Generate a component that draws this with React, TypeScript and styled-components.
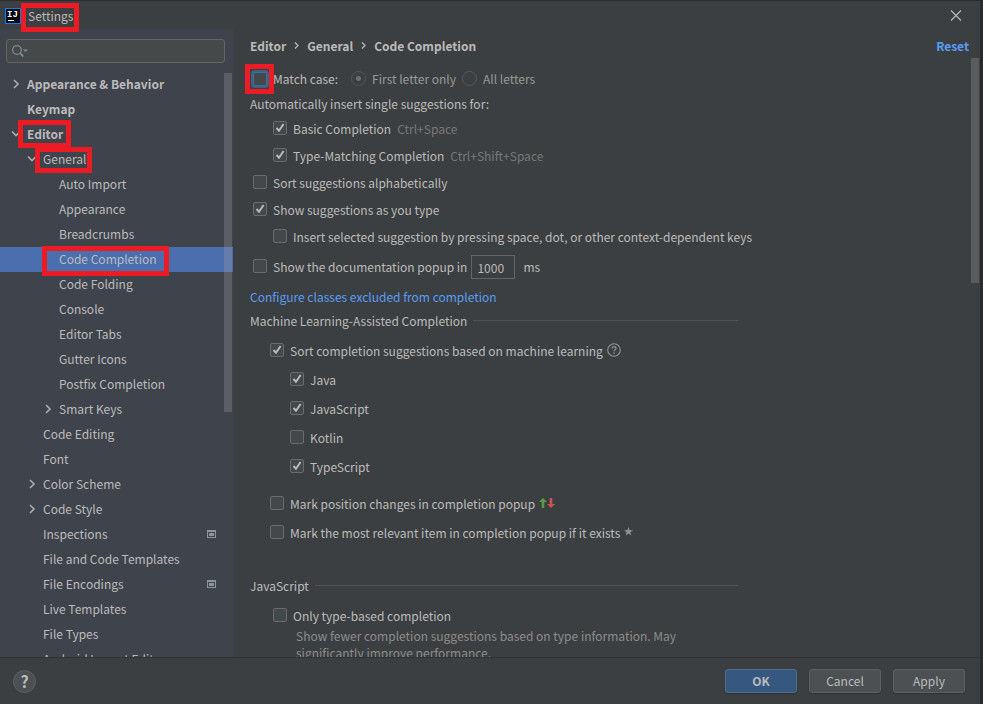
import React from "react";
import styled, { createGlobalStyle, css } from "styled-components";

const GlobalStyle = createGlobalStyle`
  *, *::before, *::after { box-sizing: border-box; }
  body { margin: 0; background: #2b2b2b; }
  body, button, input { font: 12px/16px "Noto Sans CJK KR", "Noto Sans", sans-serif; color: #bbbbbb; }
`;

const Dialog = styled.div`
  display: flex;
  flex-direction: column;
  height: 100vh;
  background: #3c3f41;
  border: solid #2b2b2b;
  border-width: 1px 3px 0 0;
`;

const TitleBar = styled.header`
  display: flex;
  align-items: center;
  height: 28px;
  flex: none;
  padding: 2px 18px 0 5px;
  gap: 7px;
`;

const Title = styled.h1`
  flex: 1;
  margin: 0;
  font-size: 12px;
  line-height: 16px;
  font-weight: 400;
`;

const IconButton = styled.button`
  display: grid;
  place-items: center;
  padding: 0;
  border: 0;
  background: none;
`;

const Columns = styled.div`
  flex: 1;
  min-height: 0;
  display: flex;
`;

const Sidebar = styled.aside`
  flex: none;
  width: 233px;
  display: flex;
  flex-direction: column;
  background: #3f434c;
`;

const SearchBox = styled.label`
  display: flex;
  align-items: center;
  flex: none;
  height: 24px;
  margin: 10px 8px 9px 6px;
  padding: 0 5px;
  gap: 4px;
  background: #45494a;
  border: 1px solid #646464;
  border-radius: 3px;
`;

const SearchInput = styled.input`
  flex: 1;
  min-width: 0;
  padding: 0;
  border: 0;
  outline: 0;
  background: none;
`;

const TreeArea = styled.div`
  position: relative;
  flex: 1;
  min-height: 0;
  overflow: hidden;
`;

const Tree = styled.ul`
  margin: 0;
  padding: 0;
  list-style: none;
`;

const TreeRow = styled.button<{ $depth: number; $selected?: boolean; $bold?: boolean }>`
  display: flex;
  align-items: center;
  width: 100%;
  height: 25px;
  padding: 0 17px 2px ${(p) => 8 + p.$depth * 16}px;
  gap: 3px;
  border: 0;
  text-align: left;
  white-space: nowrap;
  background: ${(p) => (p.$selected ? "#4b6eaf" : "transparent")};
  font-weight: ${(p) => (p.$bold ? 700 : 400)};
`;

const ArrowCell = styled.span`
  width: 16px;
  height: 16px;
  flex: none;
`;

const RowLabel = styled.span`
  flex: 1;
`;

const Scrollbar = styled.div<{ $length: string }>`
  position: absolute;
  top: 1px;
  right: 1px;
  width: 8px;
  height: ${(p) => p.$length};
  background: rgba(166, 166, 166, 0.28);
`;

const Marked = styled.span<{ $inset: string }>`
  position: relative;
  display: inline-block;
  &::after {
    content: "";
    position: absolute;
    z-index: 1;
    inset: ${(p) => p.$inset};
    border: 5px solid #ed1c24;
    pointer-events: none;
  }
`;

const Main = styled.main`
  flex: 1;
  min-width: 0;
  display: flex;
  flex-direction: column;
`;

const MainHeader = styled.div`
  display: flex;
  align-items: center;
  justify-content: space-between;
  flex: none;
  height: 28px;
  padding: 6px 11px 0 17px;
`;

const Breadcrumbs = styled.nav`
  display: flex;
  align-items: center;
  gap: 8px;
  font-weight: 700;
`;

const Link = styled.a<{ $strong?: boolean }>`
  color: #589df6;
  text-decoration: none;
  font-weight: ${(p) => (p.$strong ? 700 : 400)};
`;

const Options = styled.div`
  position: relative;
  flex: 1;
  min-height: 0;
  overflow: hidden;
  padding: 8px 0 0 17px;
`;

const Form = styled.form`
  max-width: 488px;
`;

const OptionRow = styled.div<{ $indent?: number; $height?: number }>`
  display: flex;
  align-items: center;
  height: ${(p) => p.$height ?? 27}px;
  padding-left: ${(p) => p.$indent ?? 0}px;
  white-space: nowrap;
`;

const OptionLabel = styled.label<{ $disabled?: boolean }>`
  display: flex;
  align-items: center;
  gap: 6px;
  color: ${(p) => (p.$disabled ? "#999999" : "#bbbbbb")};
`;

const CheckBox = styled.input<{ $focused?: boolean }>`
  appearance: none;
  display: block;
  flex: none;
  width: 14px;
  height: 14px;
  margin: 0 0 2px;
  border: 1px solid #6b6b6b;
  border-radius: 2px;
  background: #43494a;
  &:checked {
    background: #43494a
      url("data:image/svg+xml,%3Csvg xmlns='http://www.w3.org/2000/svg' width='12' height='12'%3E%3Cpath d='M2.5 6 5 8.7 9.6 2' fill='none' stroke='%23bbbbbb' stroke-width='2'/%3E%3C/svg%3E")
      center no-repeat;
  }
  ${(p) =>
    p.$focused &&
    css`
      margin: 0;
      border-color: #466d94;
      box-shadow: 0 0 0 2px #3d6185;
    `}
`;

const Radio = styled.input`
  appearance: none;
  flex: none;
  width: 15px;
  height: 15px;
  margin: 0;
  border: 1px solid #545658;
  border-radius: 50%;
  &:checked {
    background: radial-gradient(circle, #6b6d6f 2px, transparent 3px);
  }
`;

const RadioGroup = styled.div`
  display: flex;
  gap: 6px;
  padding-left: 13px;
`;

const Shortcut = styled.span`
  padding-left: 6px;
  color: #787878;
`;

const DelayInput = styled.input`
  width: 44px;
  height: 24px;
  margin: 0 8px 0 4px;
  padding: 0 5px;
  border: 1px solid #646464;
  background: #3c3f41;
`;

const Section = styled.h2<{ $above?: number; $below: number }>`
  display: flex;
  align-items: center;
  gap: 6px;
  height: 21px;
  margin: ${(p) => p.$above ?? 0}px 0 ${(p) => p.$below}px;
  font-size: 12px;
  line-height: 16px;
  font-weight: 400;
  &::after {
    content: "";
    flex: 1;
    height: 1px;
    background: #515456;
  }
`;

const Group = styled.div`
  margin-bottom: 8px;
`;

const Hint = styled.p`
  width: 400px;
  margin: -2px 0 0 46px;
  line-height: 17px;
  color: #8c8c8c;
`;

const Footer = styled.footer`
  display: flex;
  align-items: center;
  flex: none;
  height: 47px;
  gap: 12px;
  padding: 0 15px 0 13px;
  border-top: 1px solid #2f3133;
`;

const HelpButton = styled.button`
  width: 23px;
  height: 23px;
  margin-right: auto;
  padding: 0;
  border: 1px solid #5e6060;
  border-radius: 50%;
  background: #4c5052;
  font-size: 16px;
  font-weight: 700;
  line-height: 20px;
`;

const PushButton = styled.button<{ $primary?: boolean }>`
  width: 72px;
  height: 24px;
  padding: 0;
  border: 1px solid ${(p) => (p.$primary ? "#4c708c" : "#5e6060")};
  border-radius: 3px;
  background: ${(p) => (p.$primary ? "#365880" : "#4c5052")};
  font-weight: ${(p) => (p.$primary ? 700 : 400)};
  box-shadow: 0 1px 1px rgba(0, 0, 0, 0.2);
`;

const TrailingIcon = styled.svg`
  flex: none;
  margin: 0 0 2px 4px;
`;

function Logo() {
  return (
    <svg width="16" height="16" viewBox="0 0 16 16" aria-hidden="true">
      <rect x="0.5" y="0.5" width="15" height="15" fill="#090a0c" stroke="#087cfa" />
      <text x="2" y="9" fontFamily="Liberation Mono, monospace" fontSize="9" fontWeight="700" fill="#ffffff">
        IJ
      </text>
      <path d="M3 12.5h6" stroke="#ffffff" />
    </svg>
  );
}

function Arrow({ open }: { open?: boolean }) {
  return (
    <svg width="16" height="16" viewBox="0 0 16 16" aria-hidden="true">
      <path d={open ? "M4 5.5 8 9.5 12 5.5" : "M6 4 10 8 6 12"} fill="none" stroke="#adadad" strokeWidth="1.6" />
    </svg>
  );
}

function Crumb() {
  return (
    <svg width="5" height="10" viewBox="0 0 5 10" aria-hidden="true">
      <path d="M1 1.5 4 4.5 1 7.5" fill="none" stroke="#bbbbbb" strokeWidth="1.2" />
    </svg>
  );
}

function ProjectIcon() {
  return (
    <svg width="9" height="8" viewBox="0 0 9 8" aria-hidden="true">
      <path d="M0 0h9v8H0zM1 2v5h7V2z" fill="#8b95a0" fillRule="evenodd" />
      <rect x="2" y="3" width="5" height="3" fill="#8b95a0" />
    </svg>
  );
}

type Node = {
  label: string;
  depth: number;
  arrow?: "open" | "closed";
  bold?: boolean;
  selected?: boolean;
  project?: boolean;
  mark?: string;
};

const nodes: Node[] = [
  { label: "Appearance & Behavior", depth: 0, arrow: "closed", bold: true },
  { label: "Keymap", depth: 0, bold: true },
  { label: "Editor", depth: 0, arrow: "open", bold: true, mark: "-6px -8px -6px -9px" },
  { label: "General", depth: 1, arrow: "open", mark: "-4px -6px -6px -8px" },
  { label: "Auto Import", depth: 2 },
  { label: "Appearance", depth: 2 },
  { label: "Breadcrumbs", depth: 2 },
  { label: "Code Completion", depth: 2, selected: true, mark: "-5px -12px -9px -17px" },
  { label: "Code Folding", depth: 2 },
  { label: "Console", depth: 2 },
  { label: "Editor Tabs", depth: 2 },
  { label: "Gutter Icons", depth: 2 },
  { label: "Postfix Completion", depth: 2 },
  { label: "Smart Keys", depth: 2, arrow: "closed" },
  { label: "Code Editing", depth: 1 },
  { label: "Font", depth: 1 },
  { label: "Color Scheme", depth: 1, arrow: "closed" },
  { label: "Code Style", depth: 1, arrow: "closed" },
  { label: "Inspections", depth: 1, project: true },
  { label: "File and Code Templates", depth: 1 },
  { label: "File Encodings", depth: 1, project: true },
  { label: "Live Templates", depth: 1 },
  { label: "File Types", depth: 1 },
  { label: "Android Layout Editor", depth: 1 },
];

type OptionProps = {
  label: string;
  indent: number;
  height?: number;
  checked?: boolean;
  children?: React.ReactNode;
};

function Option({ label, indent, height, checked, children }: OptionProps) {
  return (
    <OptionRow $indent={indent} $height={height}>
      <OptionLabel>
        <CheckBox type="checkbox" defaultChecked={checked} />
        {label}
      </OptionLabel>
      {children}
    </OptionRow>
  );
}

export default function App() {
  return (
    <Dialog role="dialog" aria-label="Settings">
      <GlobalStyle />
      <TitleBar>
        <Logo />
        <Title>
          <Marked $inset="-5px -6px -8px -7px">Settings</Marked>
        </Title>
        <IconButton type="button" aria-label="Close">
          <svg width="12" height="12" viewBox="0 0 12 12">
            <path d="M1 0.5 11 10.5M11 0.5 1 10.5" stroke="#bbbbbb" strokeWidth="1.1" />
          </svg>
        </IconButton>
      </TitleBar>
      <Columns>
        <Sidebar>
          <SearchBox>
            <svg width="17" height="14" viewBox="0 0 17 14" aria-hidden="true">
              <circle cx="5" cy="6" r="4.3" fill="none" stroke="#7f8b91" strokeWidth="1.3" />
              <path d="M8 9.2 11.3 12.5" stroke="#7f8b91" strokeWidth="1.8" />
              <path d="M11 5.5h5L13.5 8z" fill="#7f8b91" />
            </svg>
            <SearchInput type="text" aria-label="Search settings" />
          </SearchBox>
          <TreeArea>
            <Tree>
              {nodes.map((n) => (
                <li key={n.label}>
                  <TreeRow type="button" $depth={n.depth} $selected={n.selected} $bold={n.bold}>
                    <ArrowCell>{n.arrow && <Arrow open={n.arrow === "open"} />}</ArrowCell>
                    <RowLabel>{n.mark ? <Marked $inset={n.mark}>{n.label}</Marked> : n.label}</RowLabel>
                    {n.project && <ProjectIcon />}
                  </TreeRow>
                </li>
              ))}
            </Tree>
            <Scrollbar $length="58%" />
          </TreeArea>
        </Sidebar>
        <Main>
          <MainHeader>
            <Breadcrumbs aria-label="Breadcrumb">
              <span>Editor</span>
              <Crumb />
              <span>General</span>
              <Crumb />
              <span>Code Completion</span>
            </Breadcrumbs>
            <Link href="#reset" $strong>
              Reset
            </Link>
          </MainHeader>
          <Options>
            <Form>
              <OptionRow $indent={3}>
                <OptionLabel>
                  <Marked $inset="-8px -7px -8px -8px">
                    <CheckBox type="checkbox" $focused />
                  </Marked>
                  Match case:
                </OptionLabel>
                <RadioGroup role="radiogroup" aria-label="Match case">
                  <OptionLabel $disabled>
                    <Radio type="radio" name="case" defaultChecked disabled />
                    First letter only
                  </OptionLabel>
                  <OptionLabel $disabled>
                    <Radio type="radio" name="case" disabled />
                    All letters
                  </OptionLabel>
                </RadioGroup>
              </OptionRow>
              <OptionRow $height={23}>Automatically insert single suggestions for:</OptionRow>
              <Option label="Basic Completion" indent={23} checked>
                <Shortcut>Ctrl+Space</Shortcut>
              </Option>
              <Option label="Type-Matching Completion" indent={23} checked>
                <Shortcut>Ctrl+Shift+Space</Shortcut>
              </Option>
              <Option label="Sort suggestions alphabetically" indent={3} />
              <Option label="Show suggestions as you type" indent={3} checked />
              <Option
                label="Insert selected suggestion by pressing space, dot, or other context-dependent keys"
                indent={23}
              />
              <Option label="Show the documentation popup in" indent={3} height={34}>
                <DelayInput type="text" defaultValue="1000" aria-label="Delay in milliseconds" />
                ms
              </Option>
              <OptionRow $height={26}>
                <Link href="#excluded">Configure classes excluded from completion</Link>
              </OptionRow>
              <Section $below={5}>Machine Learning-Assisted Completion</Section>
              <Group>
                <Option label="Sort completion suggestions based on machine learning" indent={20} height={29} checked>
                  <TrailingIcon width="14" height="14" viewBox="0 0 14 14" aria-hidden="true">
                    <circle cx="7" cy="7" r="6.3" fill="none" stroke="#8f9799" strokeWidth="1.1" />
                    <path
                      d="M5 5.6C5 4.3 5.9 3.6 7 3.6s2 .7 2 1.8c0 1.3-2 1.5-2 2.9"
                      fill="none"
                      stroke="#8f9799"
                      strokeWidth="1.2"
                    />
                    <circle cx="7" cy="10.1" r="0.8" fill="#8f9799" />
                  </TrailingIcon>
                </Option>
                <Option label="Java" indent={40} height={29} checked />
                <Option label="JavaScript" indent={40} height={29} checked />
                <Option label="Kotlin" indent={40} height={29} />
                <Option label="TypeScript" indent={40} height={29} checked />
              </Group>
              <Option label="Mark position changes in completion popup" indent={20} height={29}>
                <TrailingIcon width="16" height="12" viewBox="0 0 16 12" aria-hidden="true">
                  <path d="M4 1 8 5H5.3v6H2.7V5H0z" fill="#5b9a48" />
                  <path d="M12 11 8 7h2.7V1h2.6v6H16z" fill="#c75450" />
                </TrailingIcon>
              </Option>
              <Option label="Mark the most relevant item in completion popup if it exists" indent={20} height={29}>
                <TrailingIcon width="9" height="9" viewBox="0 0 9 9" aria-hidden="true">
                  <path d="M4.5 0 5.6 3.2H9L6.3 5.2 7.3 8.5 4.5 6.5 1.7 8.5 2.7 5.2 0 3.2H3.4z" fill="#8f979d" />
                </TrailingIcon>
              </Option>
              <Section $above={28} $below={6}>
                JavaScript
              </Section>
              <Option label="Only type-based completion" indent={23} />
              <Hint>
                Show fewer completion suggestions based on type information. May significantly improve performance.
              </Hint>
            </Form>
            <Scrollbar $length="225px" />
          </Options>
        </Main>
      </Columns>
      <Footer>
        <HelpButton type="button" aria-label="Help">
          ?
        </HelpButton>
        <PushButton type="button" $primary>
          OK
        </PushButton>
        <PushButton type="button">Cancel</PushButton>
        <PushButton type="button">Apply</PushButton>
      </Footer>
    </Dialog>
  );
}
